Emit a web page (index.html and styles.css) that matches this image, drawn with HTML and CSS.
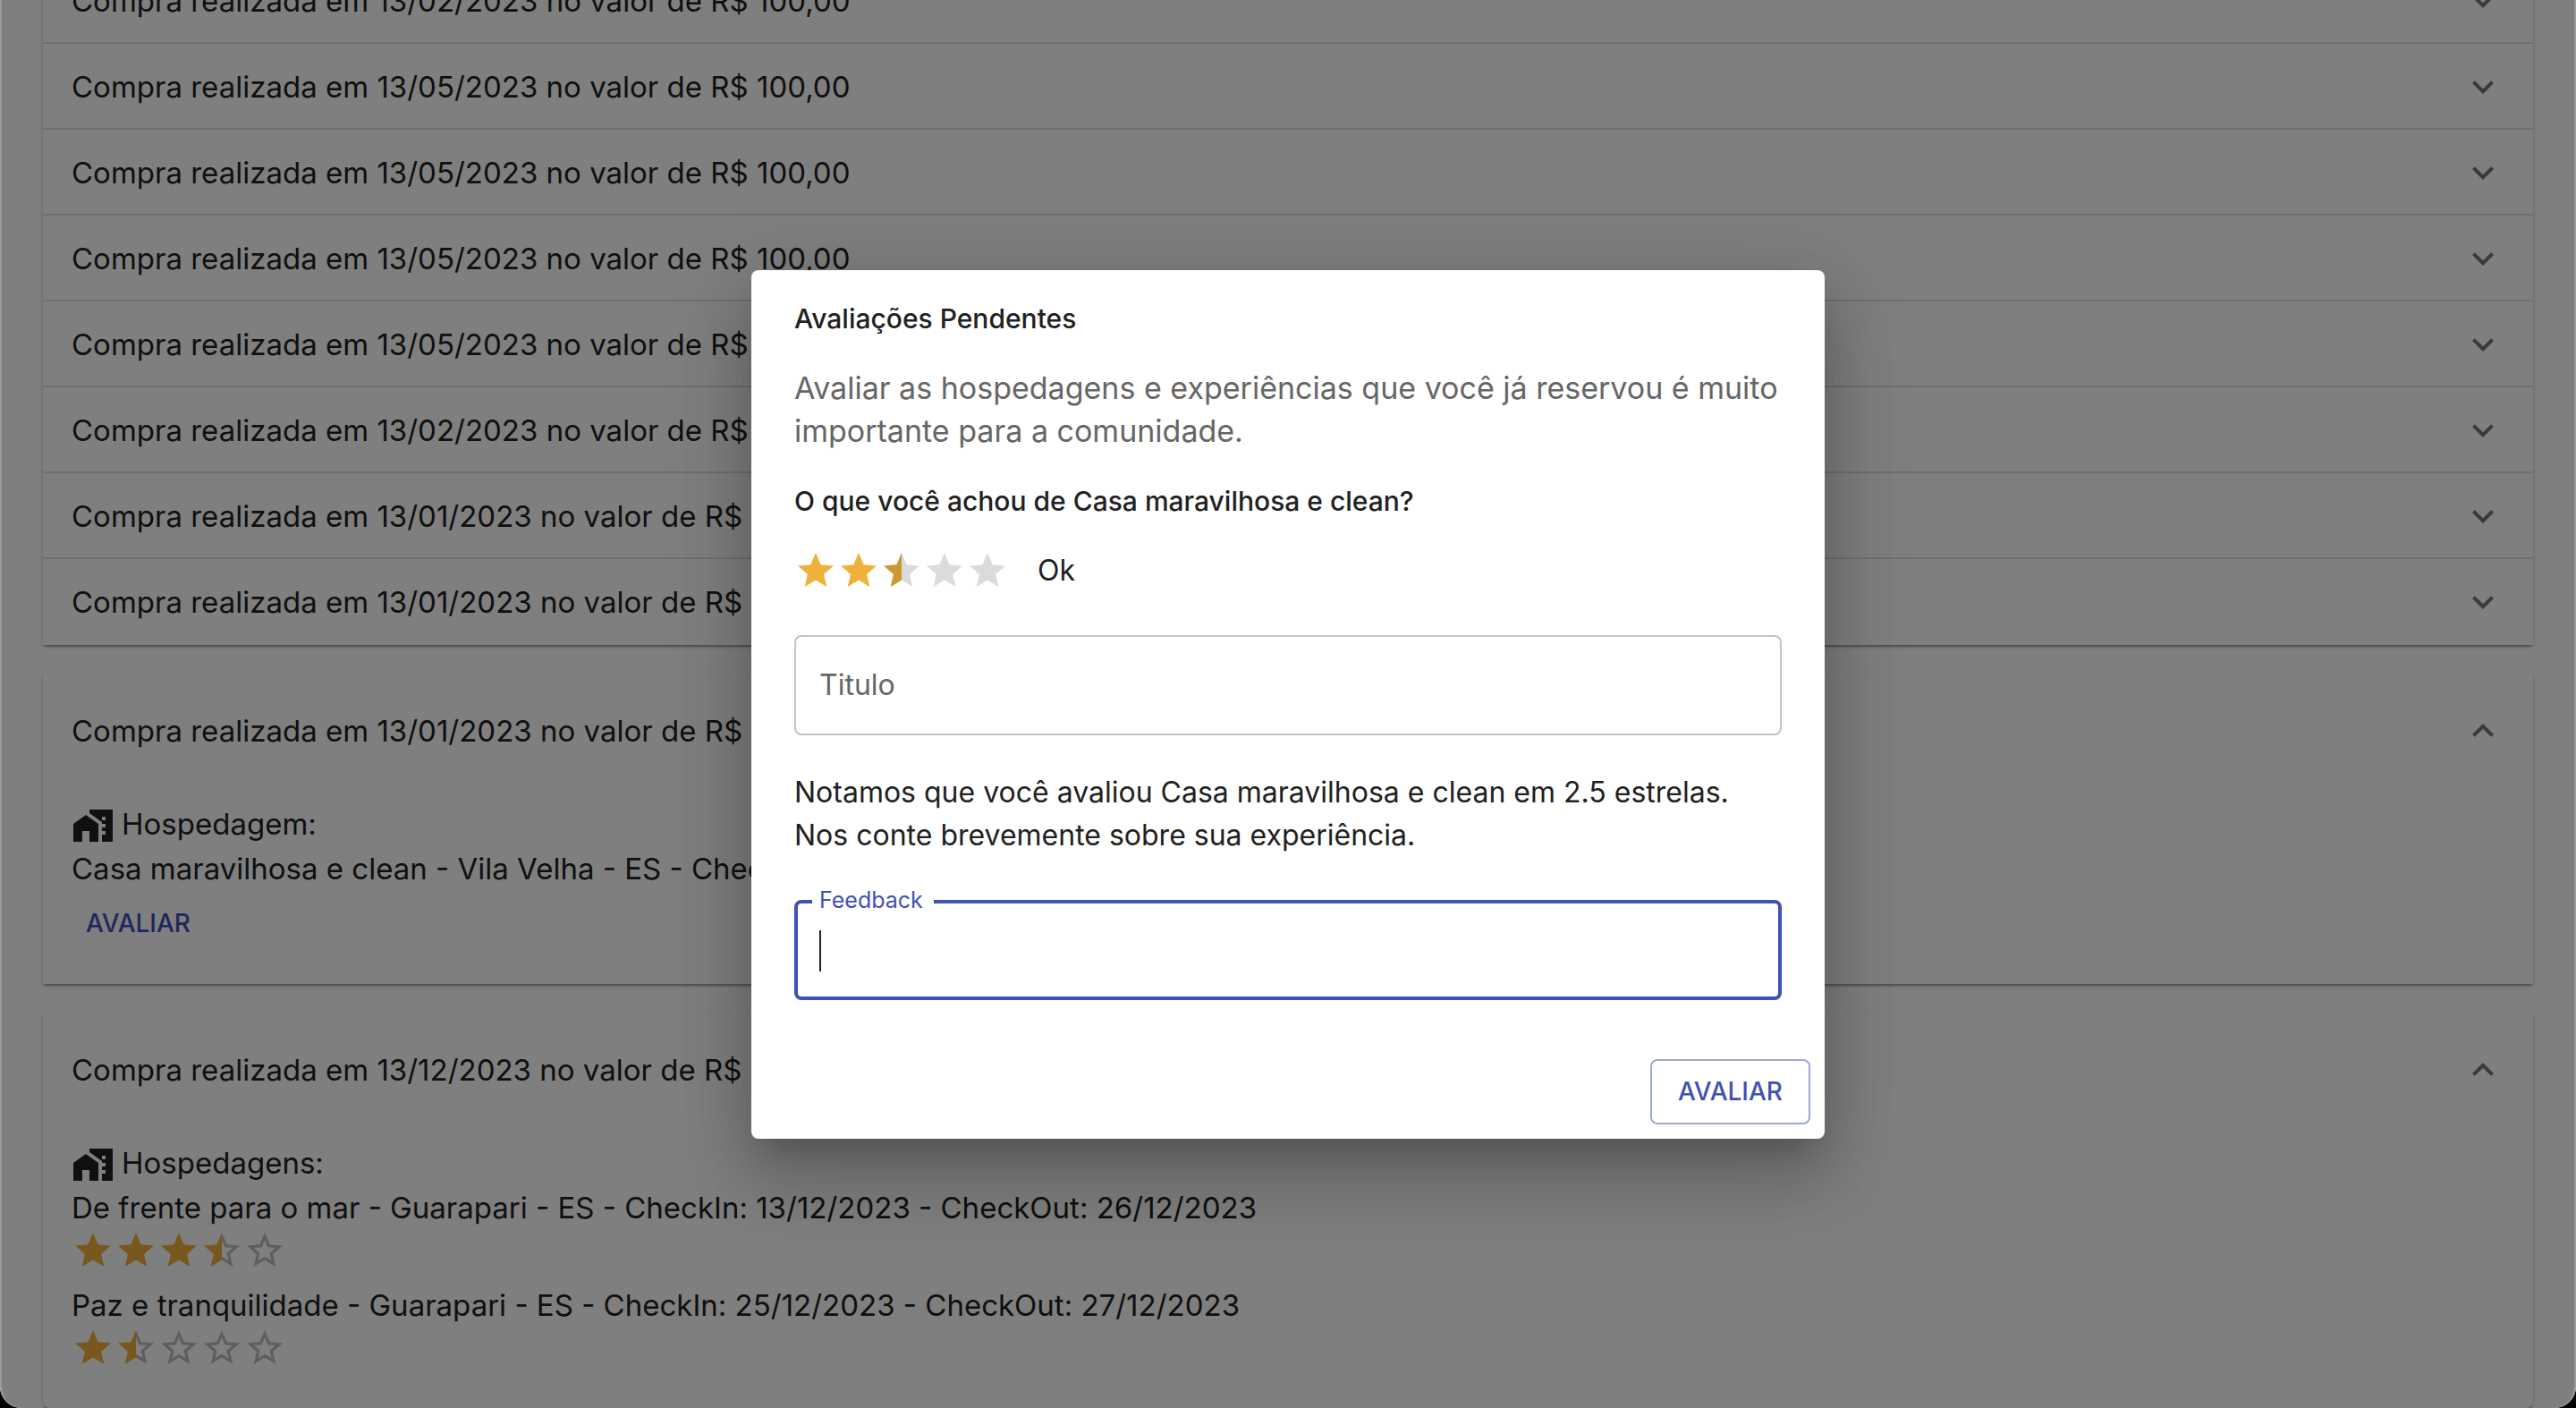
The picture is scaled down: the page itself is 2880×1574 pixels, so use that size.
FILE: index.html
```html
<!DOCTYPE html>
<html lang="pt-BR">
<head>
<meta charset="utf-8">
<meta name="viewport" content="width=device-width, initial-scale=1">
<title>Minhas compras</title>
<link rel="stylesheet" href="styles.css">
</head>
<body>
<svg class="sprite" aria-hidden="true">
  <symbol id="chevron" viewBox="0 0 24 24"><path d="M16.59 8.59 12 13.17 7.41 8.59 6 10l6 6 6-6z"/></symbol>
  <symbol id="star" viewBox="0 0 24 24"><path d="M12 17.27 18.18 21l-1.64-7.03L22 9.24l-7.19-.61L12 2 9.19 8.63 2 9.24l5.46 4.73L5.82 21z"/></symbol>
  <symbol id="star-border" viewBox="0 0 24 24"><path d="m22 9.24-7.19-.62L12 2 9.19 8.63 2 9.24l5.46 4.73L5.82 21 12 17.27 18.18 21l-1.63-7.03L22 9.24zM12 15.4l-3.76 2.27 1-4.28-3.32-2.88 4.38-.38L12 6.1l1.71 4.04 4.38.38-3.32 2.88 1 4.28L12 15.4z"/></symbol>
  <symbol id="star-half-left" viewBox="0 0 24 24"><path d="M12 2 9.19 8.63 2 9.24l5.46 4.73L5.82 21 12 17.27z"/></symbol>
  <symbol id="star-border-right" viewBox="0 0 24 24"><path d="m22 9.24-7.19-.62L12 2v4.1l1.71 4.04 4.38.38-3.32 2.88 1 4.28L12 15.4v1.87L18.18 21l-1.63-7.03L22 9.24z"/></symbol>
  <symbol id="home-work" viewBox="0 0 24 24"><path d="M1 11v10h5v-6h4v6h5V11L8 6z"/><path fill-rule="evenodd" d="M10 3v1.97l7 5V11h2v2h-2v2h2v2h-2v4h6V3H10zm9 6h-2V7h2v2z"/></symbol>
</svg>

<div class="window">
  <main class="purchases">
    <div class="group">
      <button class="summary" type="button" aria-expanded="false"><span>Compra realizada em 13/02/2023 no valor de R$ 100,00</span><svg class="icon chevron"><use href="#chevron"/></svg></button>
      <button class="summary" type="button" aria-expanded="false"><span>Compra realizada em 13/05/2023 no valor de R$ 100,00</span><svg class="icon chevron"><use href="#chevron"/></svg></button>
      <button class="summary" type="button" aria-expanded="false"><span>Compra realizada em 13/05/2023 no valor de R$ 100,00</span><svg class="icon chevron"><use href="#chevron"/></svg></button>
      <button class="summary" type="button" aria-expanded="false"><span>Compra realizada em 13/05/2023 no valor de R$ 100,00</span><svg class="icon chevron"><use href="#chevron"/></svg></button>
      <button class="summary" type="button" aria-expanded="false"><span>Compra realizada em 13/05/2023 no valor de R$ 100,00</span><svg class="icon chevron"><use href="#chevron"/></svg></button>
      <button class="summary" type="button" aria-expanded="false"><span>Compra realizada em 13/02/2023 no valor de R$ 100,00</span><svg class="icon chevron"><use href="#chevron"/></svg></button>
      <button class="summary" type="button" aria-expanded="false"><span>Compra realizada em 13/01/2023 no valor de R$ 100,00</span><svg class="icon chevron"><use href="#chevron"/></svg></button>
      <button class="summary" type="button" aria-expanded="false"><span>Compra realizada em 13/01/2023 no valor de R$ 100,00</span><svg class="icon chevron"><use href="#chevron"/></svg></button>
    </div>

    <section class="group">
      <button class="summary expanded" type="button" aria-expanded="true"><span>Compra realizada em 13/01/2023 no valor de R$ 100,00</span><svg class="icon chevron"><use href="#chevron"/></svg></button>
      <div class="details">
        <div class="kind"><svg class="icon"><use href="#home-work"/></svg><span>Hospedagem:</span></div>
        <p class="stay">Casa maravilhosa e clean - Vila Velha - ES - CheckIn: 13/01/2023 - CheckOut: 15/01/2023</p>
        <button class="button text" type="button">AVALIAR</button>
      </div>
    </section>

    <section class="group last">
      <button class="summary expanded" type="button" aria-expanded="true"><span>Compra realizada em 13/12/2023 no valor de R$ 100,00</span><svg class="icon chevron"><use href="#chevron"/></svg></button>
      <div class="details">
        <div class="kind"><svg class="icon"><use href="#home-work"/></svg><span>Hospedagens:</span></div>
        <p class="stay">De frente para o mar - Guarapari - ES - CheckIn: 13/12/2023 - CheckOut: 26/12/2023</p>
        <div class="stars given" role="img" aria-label="3.5 estrelas">
          <svg class="icon full"><use href="#star"/></svg>
          <svg class="icon full"><use href="#star"/></svg>
          <svg class="icon full"><use href="#star"/></svg>
          <svg class="icon"><use class="outline" href="#star-border-right"/><use class="full" href="#star-half-left"/></svg>
          <svg class="icon outline"><use href="#star-border"/></svg>
        </div>
        <p class="stay">Paz e tranquilidade - Guarapari - ES - CheckIn: 25/12/2023 - CheckOut: 27/12/2023</p>
        <div class="stars given" role="img" aria-label="1.5 estrelas">
          <svg class="icon full"><use href="#star"/></svg>
          <svg class="icon"><use class="outline" href="#star-border-right"/><use class="full" href="#star-half-left"/></svg>
          <svg class="icon outline"><use href="#star-border"/></svg>
          <svg class="icon outline"><use href="#star-border"/></svg>
          <svg class="icon outline"><use href="#star-border"/></svg>
        </div>
      </div>
    </section>
  </main>

  <div class="backdrop">
    <form class="dialog" role="dialog" aria-modal="true" aria-labelledby="dialog-title">
      <h2 class="title" id="dialog-title">Avaliações Pendentes</h2>
      <div class="content">
        <p class="intro">Avaliar as hospedagens e experiências que você já reservou é muito importante para a comunidade.</p>
        <h3 class="question">O que você achou de Casa maravilhosa e clean?</h3>
        <div class="rating">
          <div class="picker" role="radiogroup" aria-label="Nota">
            <div class="stars">
              <svg class="icon full"><use href="#star"/></svg>
              <svg class="icon full"><use href="#star"/></svg>
              <svg class="icon"><use class="blank" href="#star"/><use class="half" href="#star-half-left"/></svg>
              <svg class="icon blank"><use href="#star"/></svg>
              <svg class="icon blank"><use href="#star"/></svg>
            </div>
            <div class="choices">
              <input type="radio" name="nota" value="0.5" aria-label="0.5 estrela">
              <input type="radio" name="nota" value="1" aria-label="1 estrela">
              <input type="radio" name="nota" value="1.5" aria-label="1.5 estrelas">
              <input type="radio" name="nota" value="2" aria-label="2 estrelas">
              <input type="radio" name="nota" value="2.5" aria-label="2.5 estrelas" checked>
              <input type="radio" name="nota" value="3" aria-label="3 estrelas">
              <input type="radio" name="nota" value="3.5" aria-label="3.5 estrelas">
              <input type="radio" name="nota" value="4" aria-label="4 estrelas">
              <input type="radio" name="nota" value="4.5" aria-label="4.5 estrelas">
              <input type="radio" name="nota" value="5" aria-label="5 estrelas">
            </div>
          </div>
          <span>Ok</span>
        </div>
        <input class="field" type="text" placeholder="Titulo" aria-label="Titulo">
        <p class="note">Notamos que você avaliou Casa maravilhosa e clean em 2.5 estrelas.<br>Nos conte brevemente sobre sua experiência.</p>
        <div class="labelled">
          <label for="feedback">Feedback</label>
          <input class="field active" id="feedback" type="text">
          <span class="caret"></span>
        </div>
      </div>
      <div class="actions">
        <button class="button outlined" type="submit">AVALIAR</button>
      </div>
    </form>
  </div>
</div>
</body>
</html>
```
FILE: styles.css
```css
* {
  box-sizing: border-box;
}

body {
  margin: 0;
  background: #000;
  color: #212121;
  font-family: Inter, "Liberation Sans", sans-serif;
  font-size: 32px;
  line-height: 48px;
}

h2,
h3,
p {
  margin: 0;
}

button,
input {
  font: inherit;
  color: inherit;
}

.sprite {
  display: none;
}

.icon {
  display: block;
  flex: none;
  width: 48px;
  height: 48px;
  fill: currentColor;
}

.window {
  position: relative;
  display: flex;
  flex-direction: column;
  justify-content: flex-end;
  height: 100vh;
  overflow: hidden;
  border-radius: 0 0 24px 24px;
  background: #fff;
}

.purchases {
  display: flex;
  flex-direction: column;
  gap: 32px;
  padding: 0 48px;
  font-size: 33px;
}

.group {
  background: #fff;
  box-shadow: 0 4px 2px -2px rgba(0, 0, 0, 0.2), 0 2px 2px rgba(0, 0, 0, 0.14), 0 2px 6px rgba(0, 0, 0, 0.12);
}

.group.last {
  border-radius: 0 0 8px 8px;
}

.summary {
  display: flex;
  align-items: center;
  justify-content: space-between;
  width: 100%;
  height: 96px;
  padding: 0 32px;
  border: 0;
  background: none;
  text-align: left;
}

.summary + .summary {
  box-shadow: 0 -2px #dedede;
}

.summary.expanded {
  height: 128px;
}

.chevron {
  color: #757575;
}

.expanded .chevron {
  transform: rotate(180deg);
}

.details {
  padding: 16px 32px 32px;
}

.kind {
  display: flex;
  align-items: flex-start;
  gap: 8px;
  height: 50px;
}

.kind .icon {
  align-self: flex-end;
}

.stars {
  display: flex;
}

.given {
  padding-bottom: 13px;
}

.given:last-child {
  padding-bottom: 11px;
}

.full {
  fill: #f0b13c;
}

.half {
  fill: #cb9833;
}

.outline {
  fill: #bdbdbd;
}

.blank {
  fill: #dbdbdb;
}

.button {
  display: block;
  height: 73px;
  border: 0;
  border-radius: 8px;
  background: none;
  color: #3f51b5;
  font-size: 28px;
  font-weight: 500;
}

.button.text {
  padding: 0 16px;
}

.button.outlined {
  padding: 0 29px;
  border: 2px solid #9fa8da;
}

.backdrop {
  position: absolute;
  inset: 0;
  display: grid;
  place-items: center;
  border: solid #999;
  border-width: 0 2px;
  border-radius: 0 0 24px 24px;
  background: rgba(0, 0, 0, 0.5);
}

.dialog {
  width: 1200px;
  max-width: 90%;
  border-radius: 8px;
  background: #fff;
  box-shadow: 0 22px 30px -14px rgba(0, 0, 0, 0.2), 0 48px 76px 6px rgba(0, 0, 0, 0.14), 0 18px 92px 16px rgba(0, 0, 0, 0.12);
}

.title,
.question {
  font-size: 30px;
  font-weight: 500;
  line-height: 44px;
}

.title {
  padding: 32px 48px;
}

.content {
  padding: 0 48px;
}

.intro {
  color: #666;
  font-size: 34px;
}

.question {
  margin: 32px 0;
}

.rating {
  display: flex;
  gap: 32px;
  margin-bottom: 48px;
}

.picker {
  display: grid;
}

.picker > * {
  grid-area: 1 / 1;
}

.choices {
  display: grid;
  grid-template-columns: repeat(10, 1fr);
  opacity: 0;
}

.choices input {
  width: 100%;
  height: 100%;
  margin: 0;
}

.field {
  display: block;
  width: 100%;
  height: 112px;
  padding: 0 26px;
  border: 2px solid #c4c4c4;
  border-radius: 8px;
  background: #fff;
  outline: 0;
}

.field::placeholder {
  color: #666;
  opacity: 1;
}

.note {
  margin: 40px 0 48px;
}

.labelled {
  position: relative;
}

.field.active {
  padding: 0 24px;
  border: 4px solid #3f51b5;
  caret-color: transparent;
}

.labelled label {
  position: absolute;
  top: -16px;
  left: 20px;
  padding: 0 12px 0 8px;
  background: #fff;
  color: #3f51b5;
  font-size: 25px;
  line-height: 32px;
}

.caret {
  position: absolute;
  top: 34px;
  left: 28px;
  width: 2px;
  height: 46px;
  background: #212121;
}

.actions {
  display: flex;
  justify-content: flex-end;
  padding: 66px 16px 16px;
}
```
